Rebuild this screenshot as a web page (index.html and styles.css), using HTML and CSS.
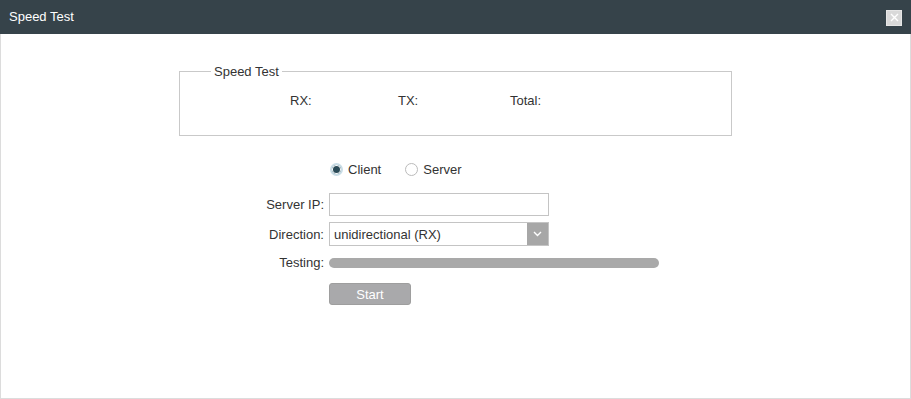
FILE: index.html
```html
<!DOCTYPE html>
<html lang="en">
<head>
  <meta charset="UTF-8" />
  <title>Speed Test</title>
  <link rel="stylesheet" href="styles.css">
</head>
<body>
  <div class="dialog">
    <header class="dialog-head">
      <span class="dialog-title">Speed Test</span>
      <button class="btn-close" aria-label="Close">
        <svg width="9" height="9" viewBox="0 0 9 9"><path d="M1 1L8 8M8 1L1 8" stroke="#fff" stroke-width="1.4"/></svg>
      </button>
    </header>

    <div class="dialog-body">
      <fieldset class="result-box">
        <legend>Speed Test</legend>
        <div class="result-row">
          <span class="rx">RX:</span>
          <span class="tx">TX:</span>
          <span class="total">Total:</span>
        </div>
      </fieldset>

      <div class="form">
        <div></div>
        <div class="radio-group">
          <label class="radio checked"><span class="dot"></span>Client</label>
          <label class="radio"><span class="dot"></span>Server</label>
        </div>

        <label class="field-label">Server IP:</label>
        <input type="text" class="text-input" />

        <label class="field-label">Direction:</label>
        <div class="select">
          <span class="select-text">unidirectional (RX)</span>
          <span class="select-arrow">
            <svg width="9" height="6" viewBox="0 0 9 6"><path d="M1 1L4.5 4.5L8 1" fill="none" stroke="#fff" stroke-width="1.4"/></svg>
          </span>
        </div>

        <label class="field-label testing-label">Testing:</label>
        <div class="progress"></div>

        <div></div>
        <div><button class="btn-start">Start</button></div>
      </div>
    </div>
  </div>
</body>
</html>
```

FILE: styles.css
```css
* {
  box-sizing: border-box;
}
body {
  margin: 0;
  font-family: "Liberation Sans", Arial, sans-serif;
  font-size: 13px;
  color: #333;
  background: #fff;
}

.dialog {
  width: 911px;
  height: 399px;
  border: 1px solid #dcdcdc;
  border-top: none;
  display: flex;
  flex-direction: column;
}
.dialog-head {
  height: 34px;
  background: #36434a;
  display: flex;
  align-items: center;
  justify-content: space-between;
  padding: 0 9px 0 9px;
  margin: 0 -1px;
}
.dialog-title {
  color: #fff;
  font-size: 13px;
  padding-bottom: 2px;
}
.btn-close {
  width: 16px;
  height: 16px;
  padding: 0;
  border: 1px solid #e6e6e6;
  background: #d9d9d9;
  display: flex;
  align-items: center;
  justify-content: center;
  margin-top: 1px;
}

.dialog-body {
  flex-grow: 1;
  padding-top: 30px;
}

.result-box {
  width: 553px;
  height: 72px;
  margin: 0 0 0 178px;
  padding: 0;
  border: 1px solid #c9c9c9;
}
.result-box legend {
  margin-left: 31px;
  padding: 0 3px;
  font-size: 13px;
  color: #333;
}
.result-row {
  position: relative;
  height: 40px;
}
.result-row span {
  position: absolute;
  top: 14px;
}
.rx { left: 110px; }
.tx { left: 218px; }
.total { left: 330px; }

.form {
  display: grid;
  grid-template-columns: 146px 220px;
  column-gap: 5px;
  align-items: center;
  margin-left: 177px;
  margin-top: 23px;
}
.field-label {
  text-align: right;
}
.radio-group {
  display: flex;
  gap: 24px;
  height: 20px;
  align-items: center;
  padding-left: 1px;
}
.radio {
  display: flex;
  align-items: center;
  gap: 5px;
}
.dot {
  width: 13px;
  height: 13px;
  border-radius: 50%;
  border: 1px solid #bbb;
  background: #fff;
}
.radio.checked .dot {
  border: 2px solid #c9dde6;
  background: #2a4b58;
  box-shadow: inset 0 0 0 1px #fff;
}

.text-input {
  grid-row: 2;
  grid-column: 2;
  height: 23px;
  margin-top: 14px;
  border: 1px solid #c4c4c4;
  font: inherit;
}
.form > .field-label:nth-of-type(1) {
  margin-top: 14px;
}
.select {
  height: 24px;
  margin-top: 6px;
  border: 1px solid #c4c4c4;
  display: flex;
  align-items: center;
  justify-content: space-between;
}
.form > .field-label:nth-of-type(2) {
  margin-top: 6px;
}
.select-text {
  padding-left: 4px;
}
.select-arrow {
  width: 21px;
  height: 22px;
  background: #a7a7a7;
  display: flex;
  align-items: center;
  justify-content: center;
}

.testing-label {
  margin-top: 9px;
}
.progress {
  width: 330px;
  height: 10px;
  margin-top: 9px;
  border-radius: 5px;
  background: #a9a9a9;
}

.btn-start {
  margin-top: 13px;
  width: 82px;
  height: 22px;
  border: 1px solid #9e9e9e;
  border-radius: 3px;
  background: #a9a9ab;
  color: #fff;
  font: inherit;
  font-size: 13px;
}
```
